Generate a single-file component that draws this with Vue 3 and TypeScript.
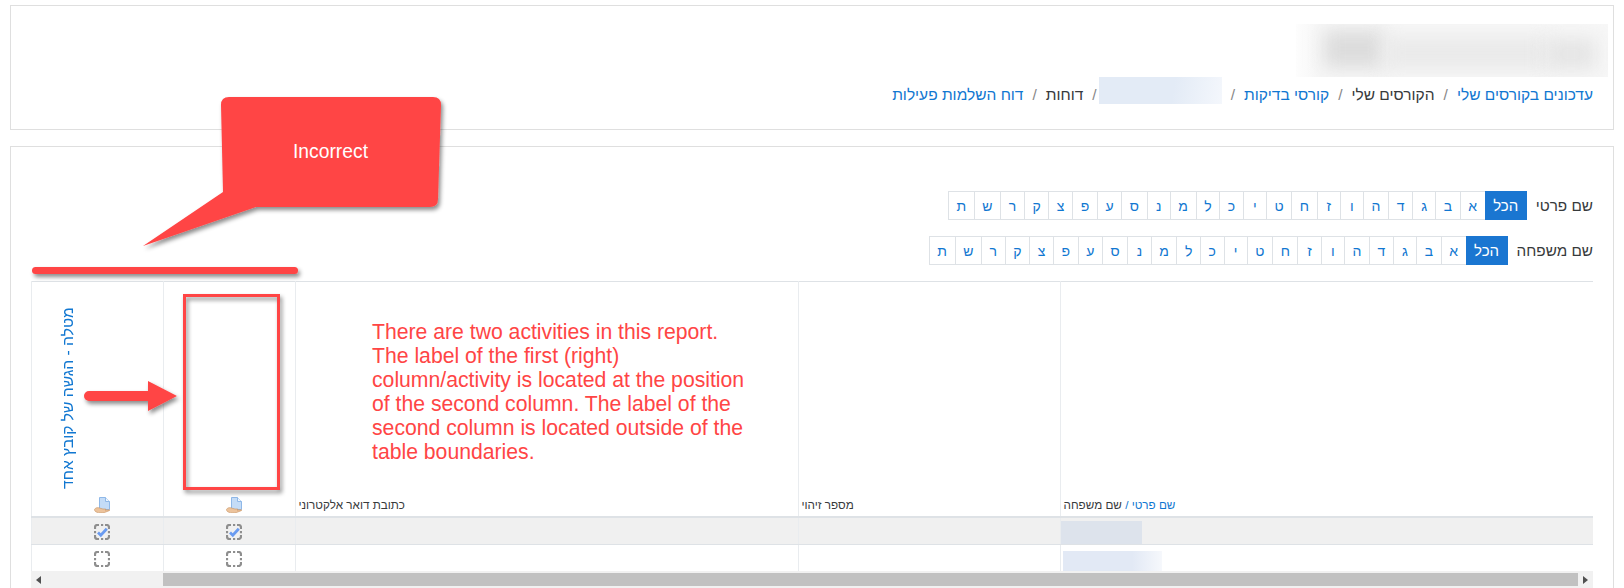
<script setup lang="ts">
const letters = ['א','ב','ג','ד','ה','ו','ז','ח','ט','י','כ','ל','מ','נ','ס','ע','פ','צ','ק','ר','ש','ת']
const bars = [
  { label: 'שם פרטי' },
  { label: 'שם משפחה' },
]
const noteLines = [
  'There are two activities in this report.',
  'The label of the first (right)',
  'column/activity is located at the position',
  'of the second column. The label of the',
  'second column is located outside of the',
  'table boundaries.',
]
</script>

<template>
  <div class="page" dir="rtl">
    <header class="card top">
      <div class="heading-blur"><i class="b1"></i><i class="b2"></i><i class="b3"></i></div>
      <nav class="crumbs">
        <a>עדכונים בקורסים שלי</a><span class="sep">/</span>
        <span>הקורסים שלי</span><span class="sep">/</span>
        <a>קורסי בדיקות</a><span class="sep">/</span>
        <span class="crumb-blur"></span><span class="sep">/</span>
        <span>דוחות</span><span class="sep">/</span>
        <a>דוח השלמות פעילות</a>
      </nav>
    </header>

    <section class="card main">
      <div v-for="bar in bars" :key="bar.label" class="bar">
        <span class="bar-label">{{ bar.label }}</span>
        <ul class="letters">
          <li class="active">הכל</li>
          <li v-for="l in letters" :key="l">{{ l }}</li>
        </ul>
      </div>

      <table class="report">
        <colgroup>
          <col class="c5" /><col class="c4" /><col class="c3" /><col class="c2" /><col class="c1" />
        </colgroup>
        <thead>
          <tr>
            <th class="txt"><a>שם פרטי</a> <a>/</a> שם משפחה</th>
            <th class="txt">מספר זיהוי</th>
            <th class="txt">כתובת דואר אלקטרוני</th>
            <th v-for="n in 2" :key="n" class="act">
              <a v-if="n === 2" class="rot">מטלה - הגשה של קובץ אחד</a>
              <svg class="ico" width="16" height="16" viewBox="0 0 16 16">
                <path d="M5.500 0.500H11.500L15.500 4.500V12.500H5.500Z" fill="#c4dcf7" stroke="#8fb8e8" />
                <path d="M11.500 0.500V4.500H15.500" fill="#eef5fd" stroke="#8fb8e8" />
                <path d="M0.500 12.500C1.500 10.500 3.500 10.300 5.500 11L9 12H11.500C12.200 12.400 11.800 12.900 11 13L15.500 12.800C16 13 15.800 13.400 15.200 13.700L10.500 15.500C8 16 4.500 15.800 3 15.300C1.500 14.800 0.500 14 0.500 12.500Z" fill="#ecc39c" stroke="#c8925f" stroke-width=".6" />
              </svg>
            </th>
          </tr>
        </thead>
        <tbody>
          <tr class="odd">
            <td class="name"><span class="name-blur one"></span></td><td></td><td></td>
            <td v-for="n in 2" :key="n" class="act">
              <svg class="ico" width="16" height="16" viewBox="0 0 16 16">
                <path class="dash" d="M5 1H3.500Q1 1 1 3.500V5M7 1H9.200M11 1H12.500Q15 1 15 3.500V5M15 7V9.200M15 11V12.500Q15 15 12.500 15H11M9.200 15H7M5 15H3.500Q1 15 1 12.500V11M1 9.200V7" />
                <path d="M4 8.500L6.800 11.200L12.800 4.800" fill="none" stroke="#6a9bf0" stroke-width="2.800" />
              </svg>
            </td>
          </tr>
          <tr>
            <td class="name"><span class="name-blur two"></span></td><td></td><td></td>
            <td v-for="n in 2" :key="n" class="act">
              <svg class="ico" width="16" height="16" viewBox="0 0 16 16">
                <path class="dash" d="M5 1H3.500Q1 1 1 3.500V5M7 1H9.200M11 1H12.500Q15 1 15 3.500V5M15 7V9.200M15 11V12.500Q15 15 12.500 15H11M9.200 15H7M5 15H3.500Q1 15 1 12.500V11M1 9.200V7" />
              </svg>
            </td>
          </tr>
        </tbody>
      </table>
      <div class="scrollbar" dir="ltr">
        <span class="arrow left"></span>
        <div class="track"><div class="thumb"></div></div>
        <span class="arrow right"></span>
      </div>
    </section>

    <svg class="marks" width="1624" height="588" viewBox="0 0 1624 588">
      <defs>
        <filter id="sh" x="-10%" y="-10%" width="120%" height="120%">
          <feDropShadow dx="2" dy="3" stdDeviation="2.200" flood-color="#000" flood-opacity=".45" />
        </filter>
      </defs>
      <g filter="url(#sh)" fill="#ff4545">
        <path d="M221 105Q221 97 229 97H433Q441 97 441 105L438 199Q438 207 430 207H256L143 246L223 192Z" />
        <rect x="32" y="267" width="266" height="7" rx="3.500" />
        <path d="M89 391H148V381L177 396L148 411V401H89A5 5 0 0 1 89 391Z" />
        <rect x="184.500" y="295.500" width="94" height="193" fill="none" stroke="#ff4545" stroke-width="3" />
      </g>
    </svg>
    <div class="callout-text" dir="ltr">Incorrect</div>
    <div class="note" dir="ltr"><div v-for="line in noteLines" :key="line">{{ line }}</div></div>
  </div>
</template>

<style>
html, body { margin: 0; background: #fff; overflow: hidden; }
</style>

<style scoped>
.page {
  position: relative;
  width: 1624px;
  height: 588px;
  overflow: hidden;
  box-sizing: border-box;
  padding: 5px 10px 0;
  background: #fff;
  font-family: "Liberation Sans", Arial, sans-serif;
  color: #373a3c;
  font-size: 15.3px;
}
a { color: #1177d1; }
.card { border: 1px solid #dfdfdf; box-sizing: border-box; }
.top { height: 125px; padding: 18px 20px 0; margin-bottom: 16px; }
.heading-blur {
  position: relative;
  width: 312px;
  height: 53px;
  margin: 0 -15px 4px 0;
  overflow: hidden;
  background: linear-gradient(90deg, #fdfdfd, #f7f7f7 22px);
}
.heading-blur i { position: absolute; display: block; filter: blur(9px); }
.b1 { left: 28px; top: 6px; width: 60px; height: 38px; background: #dcdcdc; }
.b2 { left: 88px; top: 12px; width: 165px; height: 34px; background: #eaeaea; }
.b3 { left: 250px; top: 14px; width: 50px; height: 32px; background: #e5e5e5; }
.crumbs { display: flex; align-items: center; height: 27px; white-space: nowrap; font-size: 15.5px; }
.sep { margin: 0 9px; color: #888; }
.crumb-blur { display: block; align-self: flex-start; width: 123px; height: 27px; margin-top: -4px; margin-left: -7px; background: linear-gradient(100deg, #e3ebf6 60%, #f4f7fc); }
.main { height: 460px; padding: 44px 20px 0 21px; }
.bar { display: flex; align-items: center; margin-bottom: 16px; height: 29px; }
.bar-label { margin-left: 9px; white-space: nowrap; }
.letters { display: flex; list-style: none; margin: 0; padding: 0; border: 1px solid #dee2e6; height: 29px; box-sizing: border-box; }
.letters li { display: flex; align-items: center; padding: 0 7.6px; border-left: 1px solid #dee2e6; color: #1177d1; font-size: 14px; min-width: 7px; justify-content: center; }
.letters li:last-child { border-left: 0; }
.letters li.active { background: #1a76d1; color: #fff; width: 42px; box-sizing: border-box; padding: 0; margin: -1px -1px -1px 0; border: 0; font-size: 15px; }
.report { width: 1562px; table-layout: fixed; border-collapse: collapse; border-top: 1px solid #dee2e6; }
.c1 { width: 132px; } .c2 { width: 132px; } .c3 { width: 503px; } .c4 { width: 262px; } .c5 { width: 533px; }
.report th { height: 235px; padding: 0 3px 3px; border-left: 1px solid #e9ecef; border-bottom: 2px solid #dee2e6; box-sizing: border-box; vertical-align: bottom; font-weight: 400; font-size: 11.7px; text-align: left; line-height: 16px; }
.report th:last-child, .report td:last-child { border-right: 1px solid #e9ecef; }
.report td { height: 28px; padding: 0; border-left: 1px solid #e9ecef; border-bottom: 1px solid #dee2e6; box-sizing: border-box; }
.report tbody tr:last-child td { border-bottom: 0; height: 26px; }
.odd td { background: #f0f0f0; }
.report .act { text-align: center; padding-left: 10px; padding-right: 0; }
.report td.act { padding-top: 2px; }
.ico { display: block; margin: 0 auto; }
.dash { fill: none; stroke: #8e8e8e; stroke-width: 2.2; }
.rot { display: block; writing-mode: vertical-rl; transform: rotate(180deg); font-size: 15.6px; line-height: 16px; width: 16px; height: 184px; margin: 0 auto 7px 18px; white-space: nowrap; }
.name { vertical-align: bottom; }
.name-blur { display: block; margin-right: auto; }
.one { width: 81px; height: 23px; background: #dde3ec; }
.two { width: 99px; height: 20px; margin-left: 2px; background: linear-gradient(90deg, #e2e9f5 70%, #f6f8fc); }
.scrollbar { display: flex; align-items: center; width: 1562px; height: 18px; background: #f1f1f1; }
.arrow { width: 0; height: 0; border-style: solid; margin: 0 5px; }
.arrow.left { border-width: 4px 5px 4px 0; border-color: transparent #505050 transparent transparent; }
.arrow.right { border-width: 4px 0 4px 5px; border-color: transparent transparent transparent #505050; }
.track { flex: 1; padding-left: 117px; }
.thumb { height: 13px; background: #c1c1c1; }
.marks { position: absolute; left: 0; top: 0; pointer-events: none; }
.callout-text { position: absolute; left: 293px; top: 141px; font-size: 19.3px; line-height: 22px; color: #fff; }
.note { position: absolute; left: 372px; top: 320px; font-size: 21.2px; line-height: 24px; color: #ff4545; white-space: nowrap; }
</style>
